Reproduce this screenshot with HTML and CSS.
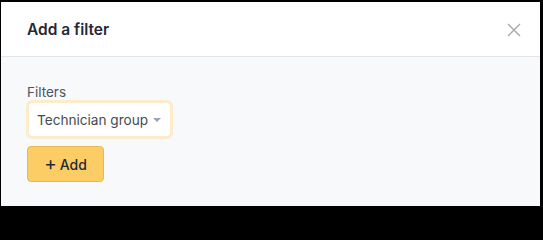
FILE: index.html
```html
<!DOCTYPE html>
<html>
<head>
<meta charset="utf-8">
<link rel="stylesheet" href="styles.css">
</head>
<body>
<div class="modal">
  <div class="header">
    <div class="title">Add a filter</div>
    <button class="close" aria-label="Close">
      <svg width="14" height="14" viewBox="0 0 14 14"><path d="M1 1L13 13M13 1L1 13" stroke="#a7a9ad" stroke-width="1.4" fill="none"/></svg>
    </button>
  </div>
  <div class="body">
    <label class="label">Filters</label>
    <div class="select-ring">
      <div class="select">
        <span>Technician group</span>
        <span class="caret"></span>
      </div>
    </div>
    <button class="add"><span class="plus">+</span>Add</button>
  </div>
</div>
</body>
</html>
```
FILE: styles.css
```css
html { margin: 0; padding: 0; background: #000; }
body {
  margin: 0;
  background: #000;
  width: 543px;
  height: 209px;
  padding: 2px 3px 3px 1px;
  box-sizing: border-box;
  font-family: Inter, "Noto Sans", sans-serif;
}
.modal {
  background: #f8f9fb;
  height: 100%;
  display: flex;
  flex-direction: column;
}
.header {
  background: #fff;
  height: 55px;
  border-bottom: 1px solid #e3e5e8;
  display: flex;
  align-items: center;
  justify-content: space-between;
  padding: 0 19px 0 26px;
  box-sizing: border-box;
  flex: none;
}
.title {
  font-size: 15.5px;
  font-weight: 600;
  color: #1f2937;
}
.close {
  background: none;
  border: 0;
  padding: 0;
  display: flex;
  margin-top: 2px;
}
.body {
  padding: 27px 26px 0 26px;
  display: flex;
  flex-direction: column;
  align-items: flex-start;
}
.label {
  font-size: 13.5px;
  color: #4b5563;
  line-height: 16px;
  margin-bottom: 0;
}
.select-ring {
  padding: 3px;
  background: #fdecca;
  border-radius: 6px;
  margin-left: -1px;
}
.select {
  background: #fff;
  border-radius: 4px;
  height: 33px;
  display: flex;
  align-items: center;
  padding: 0 9px 0 8px;
  font-size: 13.6px;
  color: #434a54;
  gap: 5px;
}
.caret {
  width: 0; height: 0;
  border-left: 4px solid transparent;
  border-right: 4px solid transparent;
  border-top: 4px solid #9ca3af;
  margin-top: 1px;
}
.add {
  margin-top: 7px;
  background: #fccd64;
  border: 1px solid #e6b954;
  border-radius: 4px;
  width: 77px;
  height: 36px;
  font-family: inherit;
  font-size: 14px;
  font-weight: 500;
  color: #1f2937;
  display: flex;
  align-items: center;
  justify-content: center;
  gap: 3px;
  padding: 0;
}
.plus {
  font-size: 19px;
  font-weight: 400;
  line-height: 1;
  margin-top: -2px;
}
```
